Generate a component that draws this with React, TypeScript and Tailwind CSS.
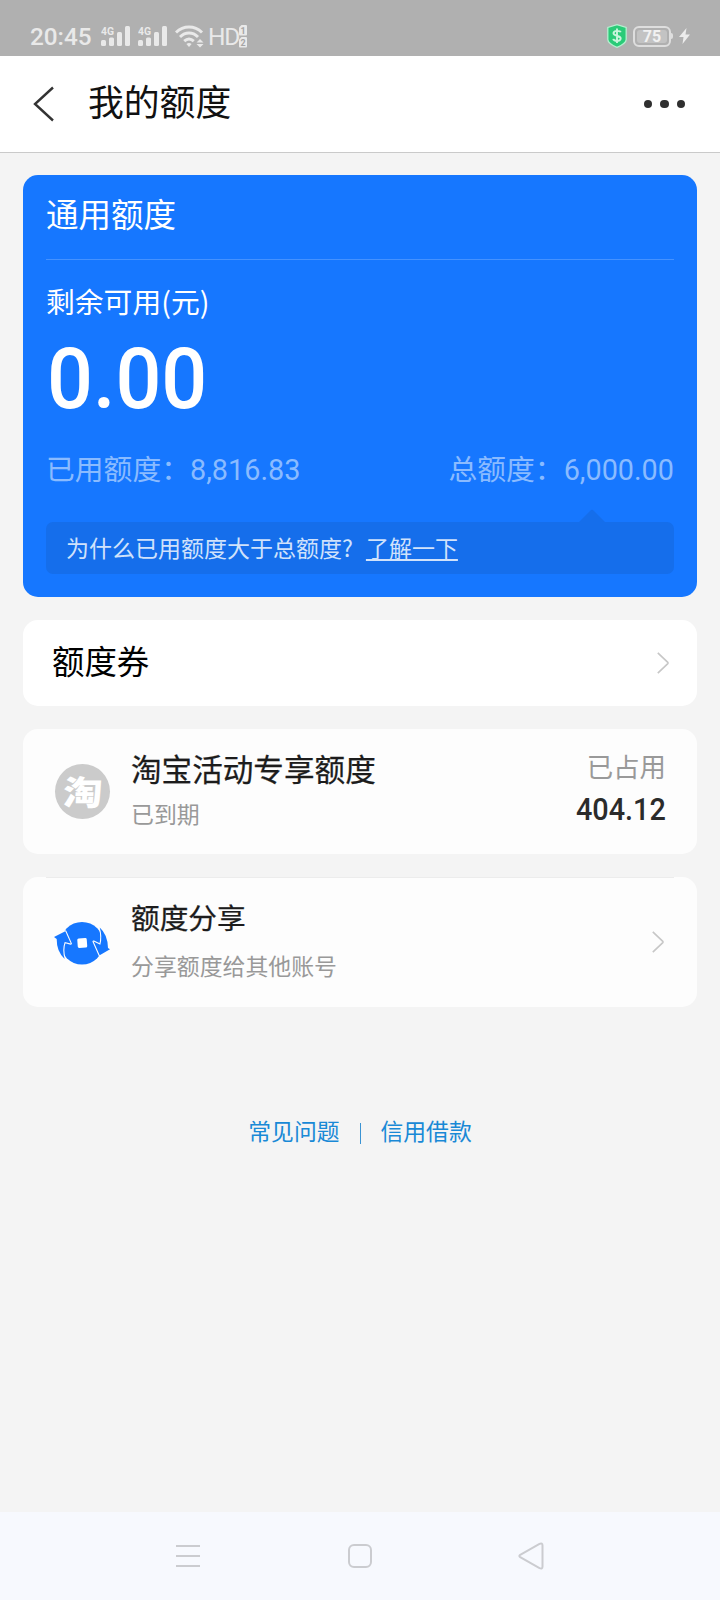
import React from 'react'
import clsx from 'clsx'

const links = ['常见问题', '信用借款']

function Signal() {
    return (
        <svg className="w-[29px] h-[21px]" viewBox="0 0 29 21" fill="#e9e9e9">
            <text x="0" y="8.6" fontSize="10.5" fontWeight="700" fontFamily="Roboto" textLength="13" lengthAdjust="spacingAndGlyphs">4G</text>
            <rect x="0" y="14" width="5" height="6" rx="1.5" />
            <rect x="8" y="11.5" width="5" height="8.5" rx="1.5" />
            <rect x="16" y="6" width="5" height="14" rx="1.5" />
            <rect x="24" y="0" width="5" height="20" rx="1.5" />
        </svg>
    )
}

function Wifi() {
    return (
        <svg className="w-[29px] h-[23px]" viewBox="0 0 29 23" fill="none" stroke="#e9e9e9" strokeWidth="3">
            <path d="M1 7.5C8.5 0.2 19.5 0.2 27 7.5" />
            <path d="M5 12C10.5 6.8 17.5 6.8 23 12" />
            <path d="M9.2 16.2C12.2 13.4 15.8 13.4 18.8 16.2" />
            <path d="M11.4 19Q14 17 16.6 19L14 22Z" fill="#e9e9e9" stroke="none" />
            <path d="M21.5 17.5L25 14L28.5 17.5ZM21.5 19L25 22.5L28.5 19Z" fill="#e9e9e9" stroke="none" />
        </svg>
    )
}

function SimCards() {
    return (
        <svg className="w-2 h-[23px]" viewBox="0 0 8 23">
            <path d="M2.5 0H7Q8 0 8 1V9.5Q8 10.5 7 10.5H1Q0 10.5 0 9.5V2.5Z" fill="#e9e9e9" />
            <path d="M2.5 12H7Q8 12 8 13V21.5Q8 22.5 7 22.5H1Q0 22.5 0 21.5V14.5Z" fill="#e9e9e9" />
            <g fill="#a5a5a5" fontFamily="Roboto" fontSize="9" fontWeight="700" textAnchor="middle">
                <text x="4" y="8.6">1</text>
                <text x="4" y="20.6">2</text>
            </g>
        </svg>
    )
}

function StatusBar() {
    return (
        <div className="h-14 bg-[#b0b0b0] pl-[30px] pr-[30px] pt-4 flex items-center text-[#e9e9e9] font-[Roboto]">
            <span className="w-[62px] pt-[1px] text-[24.3px] leading-10 font-medium">20:45</span>
            <div className="ml-[9px] flex items-center gap-2">
                <Signal />
                <Signal />
            </div>
            <div className="ml-[8px]"><Wifi /></div>
            <span className="ml-[4px] w-[31px] pt-[1px] text-[24.5px] leading-10 tracking-[-1.2px]">HD</span>
            <SimCards />
            <div className="ml-auto flex items-center">
                <svg className="w-5 h-6" viewBox="0 0 20 24">
                    <path d="M10 0.7L19.2 3.5V15.5Q19.2 19.5 10 23.3Q0.8 19.5 0.8 15.5V3.5Z" fill="#2acb78" stroke="#b4efcf" strokeWidth="1.3" />
                    <path d="M13.7 8.3C13.2 6.5 6.5 6 6.5 9.2C6.5 12.3 13.7 11.2 13.7 14.6C13.7 17.8 6.6 17.4 6.3 14.9M10 4.5V19" fill="none" stroke="#c8f5dc" strokeWidth="1.9" />
                </svg>
                <div className="ml-[6px] w-[38px] h-[21px] border-2 border-[#dedede] rounded-[6px] p-[2px]">
                    <div className="h-full w-[30px] rounded-[3px] bg-[#c3c3c3] text-center text-[16px] leading-[13px] font-bold text-[#f1f1f1]">75</div>
                </div>
                <div className="w-[2px] h-[6px] rounded-r bg-[#dedede]" />
                <svg className="ml-[6px] w-[11px] h-4" viewBox="0 0 11 16" fill="#ececec">
                    <path d="M7.5 0L0 9H4.5L3.5 16L11 6.5H6.5Z" />
                </svg>
            </div>
        </div>
    )
}

function Header() {
    return (
        <header className="h-[97px] bg-white border-b border-[#cacaca] flex items-center pl-[33px] pr-[35px]">
            <svg className="w-[22px] h-9 -mt-[1px]" viewBox="0 0 22 36" fill="none" stroke="#333" strokeWidth="2.4">
                <path d="M20 1.5L2 18L20 34.5" />
            </svg>
            <h1 className="ml-[33px] pb-[8px] text-[35.8px] leading-[50px] text-[#111]">我的额度</h1>
            <div className="ml-auto flex gap-2">
                {[0, 1, 2].map((i) => (
                    <span key={i} className="w-[8.5px] h-[8.5px] rounded-full bg-[#2f2f2f]" />
                ))}
            </div>
        </header>
    )
}

function Chevron({ className }: { className?: string }) {
    return (
        <svg className={clsx('w-3 h-[22px]', className)} viewBox="0 0 12 22" fill="none" stroke="#c7c7c7" strokeWidth="1.6">
            <path d="M0.8 0.8L10.8 10.4Q11.3 11 10.8 11.6L0.8 21.2" />
        </svg>
    )
}

function QuotaCard() {
    return (
        <section className="h-[422px] rounded-[15px] bg-[#1677ff] px-[23px] text-white">
            <h2 className="h-[85px] text-[32.5px] leading-[76px] border-b border-[#4592ff]">通用额度</h2>
            <p className="mt-[21px] text-[28.8px] leading-10">剩余可用(元)</p>
            <p className="mt-[12px] ml-[1px] font-[Roboto] font-medium text-[86px] leading-[91px] origin-left scale-x-[0.94]">0.00</p>
            <div className="mt-[24px] flex justify-between text-[28.8px] leading-10 text-[#8abbff]">
                <span>已用额度：<span className="font-[Roboto]">8,816.83</span></span>
                <span>总额度：<span className="font-[Roboto]">6,000.00</span></span>
            </div>
            <div className="relative mt-[32px] h-[52px] rounded-[7px] bg-[#156eeb] pl-[20px] text-[23px] leading-[50px] text-[#d0e2fb]">
                <svg className="absolute right-[69px] -top-[13px] w-[26px] h-[13px]" viewBox="0 0 26 13" fill="#156eeb">
                    <path d="M0 13L11.5 1.5Q13 0 14.5 1.5L26 13Z" />
                </svg>
                为什么已用额度大于总额度?
                <a className="ml-[13px] underline decoration-2 underline-offset-[2px]">了解一下</a>
            </div>
        </section>
    )
}

function ShareIcon() {
    return (
        <svg className="w-14 h-11 mt-[1px]" viewBox="0 0 56 44" fill="#1677ff">
            <ellipse cx="28" cy="22.2" rx="21.5" ry="21.3" />
            <g stroke="#fdfdfd" strokeWidth="2.2" strokeLinejoin="round" paintOrder="stroke">
                <path d="M0 16L11.3 10.3L16.8 22.6L10.7 21Q7.8 29 10.7 38Q2.5 30.5 2.7 18Z" />
                <path d="M56 28.2L45.7 34.2L39.6 20.6L46.3 23.7Q48.6 15.5 45.7 6.5Q53.7 13.5 54 27Z" />
            </g>
            <rect x="23.5" y="17.3" width="9.5" height="9.5" rx="1.5" fill="#fff" transform="rotate(-4 28 22)" />
        </svg>
    )
}

export default function App() {
    return (
        <div className="w-[720px] h-[1600px] flex flex-col overflow-hidden bg-[#f4f4f4] font-['Noto_Sans_CJK_SC',sans-serif]">
            <StatusBar />
            <Header />

            <main className="flex-1 px-[23px] pt-[22px] flex flex-col gap-[23px]">
                <QuotaCard />

                <section className="h-[86px] rounded-[15px] bg-white pl-[29px] pr-[28px] flex items-center justify-between">
                    <h2 className="pb-[6px] text-[32.4px] leading-10 text-black">额度券</h2>
                    <Chevron />
                </section>

                <section className="h-[125px] rounded-[15px] bg-[#fdfdfd] pl-8 pr-[31px] flex items-center">
                    <div className="w-[55px] h-[55px] rounded-full bg-[#cbcbcb] text-white text-center text-[34px] leading-[53px] font-black">
                        <span className="inline-block scale-x-[1.15] -skew-x-3">淘</span>
                    </div>
                    <div className="ml-[21px] pb-[7px]">
                        <h3 className="text-[30.6px] leading-10 text-[#1c1c1c] [-webkit-text-stroke:0.25px_#1c1c1c]">淘宝活动专享额度</h3>
                        <p className="mt-[9px] text-[22.9px] leading-8 text-[#999]">已到期</p>
                    </div>
                    <div className="ml-auto pb-[7px] text-right">
                        <p className="text-[26.4px] leading-9 text-[#999]">已占用</p>
                        <p className="mt-[5px] font-[Roboto] font-medium text-[32px] leading-10 text-[#2b2b2b] origin-right scale-x-[0.9]">404.12</p>
                    </div>
                </section>

                <section className="relative h-[130px] rounded-[15px] bg-[#fdfdfd] pl-[31px] pr-[33px] flex items-center">
                    <div className="absolute inset-x-[23px] top-0 h-px bg-[#ececec]" />
                    <ShareIcon />
                    <div className="ml-[21px] pb-[7px]">
                        <h3 className="text-[28.7px] leading-10 text-[#1c1c1c] [-webkit-text-stroke:0.25px_#1c1c1c]">额度分享</h3>
                        <p className="mt-[12px] text-[22.9px] leading-8 text-[#999]">分享额度给其他账号</p>
                    </div>
                    <Chevron className="ml-auto" />
                </section>

                <footer className="mt-[83px] flex justify-center items-center text-[22.8px] leading-9 text-[#1989d6]">
                    <a className="pb-[4px]">{links[0]}</a>
                    <span className="mx-[20px] w-px h-[21px] bg-[#3a93d3]" />
                    <a className="pb-[4px]">{links[1]}</a>
                </footer>
            </main>

            <nav className="h-[88px] bg-[#f7f9fe] flex items-center justify-between pl-[176px] pr-[176px]">
                <svg className="w-6 h-6" viewBox="0 0 24 24" stroke="#cbccd0" strokeWidth="2">
                    <path d="M0 2H24M0 12H24M0 22H24" />
                </svg>
                <div className="ml-[2px] w-6 h-6 rounded-[6px] border-2 border-[#cbccd0]" />
                <svg className="w-[26px] h-[28px]" viewBox="0 0 26 28" fill="none" stroke="#cbccd0" strokeWidth="2">
                    <path d="M2.2 12.8L21.5 1.8Q24.5 0.5 24.5 3.5V24.5Q24.5 27.5 21.5 26.2L2.2 15.2Q0.5 14 2.2 12.8Z" />
                </svg>
            </nav>
        </div>
    )
}
